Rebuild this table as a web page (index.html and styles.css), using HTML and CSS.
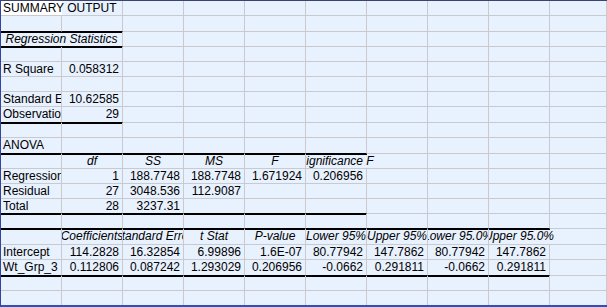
FILE: index.html
```html
<!DOCTYPE html>
<html>
<head>
<meta charset="utf-8">
<title>Summary Output</title>
<link rel="stylesheet" href="styles.css">
</head>
<body>
<div class="frame">
  <div class="sheet">
    <!-- row 1 -->
    <div class="c sp2 sel">SUMMARY OUTPUT</div><div class="c"></div><div class="c"></div><div class="c"></div><div class="c"></div><div class="c"></div><div class="c"></div><div class="c"></div><div class="c"></div>
    <!-- row 2 -->
    <div class="c tk"></div><div class="c tk"></div><div class="c"></div><div class="c"></div><div class="c"></div><div class="c"></div><div class="c"></div><div class="c"></div><div class="c"></div><div class="c"></div>
    <!-- row 3 -->
    <div class="c sp2 h tk">Regression Statistics</div><div class="c"></div><div class="c"></div><div class="c"></div><div class="c"></div><div class="c"></div><div class="c"></div><div class="c"></div><div class="c"></div>
    <!-- row 4 -->
    <div class="c"></div><div class="c"></div><div class="c"></div><div class="c"></div><div class="c"></div><div class="c"></div><div class="c"></div><div class="c"></div><div class="c"></div><div class="c"></div>
    <!-- row 5 -->
    <div class="c">R Square</div><div class="c n">0.058312</div><div class="c"></div><div class="c"></div><div class="c"></div><div class="c"></div><div class="c"></div><div class="c"></div><div class="c"></div><div class="c"></div>
    <!-- row 6 -->
    <div class="c"></div><div class="c"></div><div class="c"></div><div class="c"></div><div class="c"></div><div class="c"></div><div class="c"></div><div class="c"></div><div class="c"></div><div class="c"></div>
    <!-- row 7 -->
    <div class="c">Standard Error</div><div class="c n">10.62585</div><div class="c"></div><div class="c"></div><div class="c"></div><div class="c"></div><div class="c"></div><div class="c"></div><div class="c"></div><div class="c"></div>
    <!-- row 8 -->
    <div class="c tk">Observations</div><div class="c n tk">29</div><div class="c"></div><div class="c"></div><div class="c"></div><div class="c"></div><div class="c"></div><div class="c"></div><div class="c"></div><div class="c"></div>
    <!-- row 9 -->
    <div class="c"></div><div class="c"></div><div class="c"></div><div class="c"></div><div class="c"></div><div class="c"></div><div class="c"></div><div class="c"></div><div class="c"></div><div class="c"></div>
    <!-- row 10 -->
    <div class="c tk">ANOVA</div><div class="c tk"></div><div class="c tk"></div><div class="c tk"></div><div class="c tk"></div><div class="c tk"></div><div class="c"></div><div class="c"></div><div class="c"></div><div class="c"></div>
    <!-- row 11 -->
    <div class="c"></div><div class="c h">df</div><div class="c h">SS</div><div class="c h">MS</div><div class="c h">F</div><div class="c sp2 open"><div class="clipl">Significance F</div></div><div class="c"></div><div class="c"></div><div class="c"></div>
    <!-- row 12 -->
    <div class="c">Regression</div><div class="c n">1</div><div class="c n">188.7748</div><div class="c n">188.7748</div><div class="c n">1.671924</div><div class="c n">0.206956</div><div class="c"></div><div class="c"></div><div class="c"></div><div class="c"></div>
    <!-- row 13 -->
    <div class="c">Residual</div><div class="c n">27</div><div class="c n">3048.536</div><div class="c n">112.9087</div><div class="c"></div><div class="c"></div><div class="c"></div><div class="c"></div><div class="c"></div><div class="c"></div>
    <!-- row 14 -->
    <div class="c tk">Total</div><div class="c n tk">28</div><div class="c n tk">3237.31</div><div class="c tk"></div><div class="c tk"></div><div class="c tk"></div><div class="c"></div><div class="c"></div><div class="c"></div><div class="c"></div>
    <!-- row 15 -->
    <div class="c tk"></div><div class="c tk"></div><div class="c tk"></div><div class="c tk"></div><div class="c tk"></div><div class="c tk"></div><div class="c tk"></div><div class="c tk"></div><div class="c tk"></div><div class="c"></div>
    <!-- row 16 -->
    <div class="c"></div><div class="c h">Coefficients</div><div class="c h">Standard Error</div><div class="c h">t Stat</div><div class="c h">P-value</div><div class="c h">Lower 95%</div><div class="c h">Upper 95%</div><div class="c h">Lower 95.0%</div><div class="c sp2 open"><div class="clipl">Upper 95.0%</div></div>
    <!-- row 17 -->
    <div class="c">Intercept</div><div class="c n">114.2828</div><div class="c n">16.32854</div><div class="c n">6.99896</div><div class="c n">1.6E-07</div><div class="c n">80.77942</div><div class="c n">147.7862</div><div class="c n">80.77942</div><div class="c n">147.7862</div><div class="c"></div>
    <!-- row 18 -->
    <div class="c tk">Wt_Grp_3</div><div class="c n tk">0.112806</div><div class="c n tk">0.087242</div><div class="c n tk">1.293029</div><div class="c n tk">0.206956</div><div class="c n tk">-0.0662</div><div class="c n tk">0.291811</div><div class="c n tk">-0.0662</div><div class="c n tk">0.291811</div><div class="c"></div>
    <!-- row 19 -->
    <div class="c"></div><div class="c"></div><div class="c"></div><div class="c"></div><div class="c"></div><div class="c"></div><div class="c"></div><div class="c"></div><div class="c"></div><div class="c"></div>
    <!-- row 20 -->
    <div class="c"></div><div class="c"></div><div class="c"></div><div class="c"></div><div class="c"></div><div class="c"></div><div class="c"></div><div class="c"></div><div class="c"></div><div class="c"></div>
  </div>
</div>
</body>
</html>
```

FILE: styles.css
```css
html, body {
  margin: 0;
  padding: 0;
}

body {
  width: 607px;
  height: 307px;
  overflow: hidden;
  background: #e8f1fe;
}

.frame {
  box-sizing: border-box;
  width: 607px;
  height: 307px;
  display: flex;
  flex-direction: column;
  border-top: 1px solid #3b4470;
  border-left: 1px solid #33449a;
  border-bottom: 2px solid #3050c2;
  background: #e8f1fe;
  overflow: hidden;
}

.sheet {
  flex: 0 0 304px;
  height: 304px;
  overflow: hidden;
  display: grid;
  grid-template-columns: repeat(9, 61px) 1fr;
  grid-template-rows: 15px 16px 15px 15px 15px 15px 15px 16px 15px 16px 15px 15px 15px 15px 15px 16px 15px 16px 15px 15px;
}

.c {
  box-sizing: border-box;
  min-width: 0;
  border-right: 1px solid #cacace;
  border-bottom: 1px solid #cacace;
  padding: 0 2px;
  font-family: "Liberation Sans", Arial, sans-serif;
  font-size: 12px;
  line-height: 14px;
  color: #000;
  white-space: nowrap;
  overflow: hidden;
}

.sp2 {
  grid-column: span 2;
}

.sel {
  background: linear-gradient(90deg, #ffffff 0, #ffffff 61px, transparent 61px);
}

.n {
  text-align: right;
  padding-right: 3px;
}

.h {
  font-style: italic;
  display: flex;
  justify-content: center;
  padding: 0;
}

.tk {
  border-bottom-color: #000;
  box-shadow: 0 1px 0 #000;
}

.open {
  padding: 0;
}

.clipl {
  width: 60px;
  display: flex;
  justify-content: center;
  font-style: italic;
  clip-path: inset(0 -120px 0 0);
}
```
